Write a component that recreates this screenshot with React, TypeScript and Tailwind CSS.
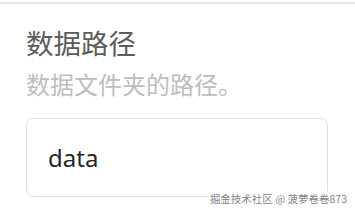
import React from 'react';

/** Settings field: data folder path. */
export default function App() {
  return (
    <div
      className="relative h-[211px] w-[355px] overflow-hidden bg-white"
      style={{ fontFamily: '"Noto Sans", "Noto Sans CJK SC", sans-serif' }}
    >
      <div className="mt-[2px] border-t-2 border-[#e6e6e6] pl-[26px] pt-[22px]">
        <div className="text-[27.5px] leading-[36px] text-[#5c5c5c]">数据路径</div>
        <div className="mt-[8px] text-[24px] leading-[30px] text-[#bdbdbd]">数据文件夹的路径。</div>
        <div className="mt-[18px] flex h-[79px] w-[302px] items-center rounded-[7px] border border-[#e0e0e0] px-[21px]">
          <span className="text-[24px] text-[#262626]">data</span>
        </div>
      </div>
      <div
        className="absolute bottom-[6px] right-[7px] bg-white px-[1px] text-[10.5px] leading-[13px] text-[#858585]"
        style={{ fontFamily: '"Noto Sans CJK SC", sans-serif' }}
      >
        掘金技术社区 @ 菠萝卷卷873
      </div>
    </div>
  );
}
